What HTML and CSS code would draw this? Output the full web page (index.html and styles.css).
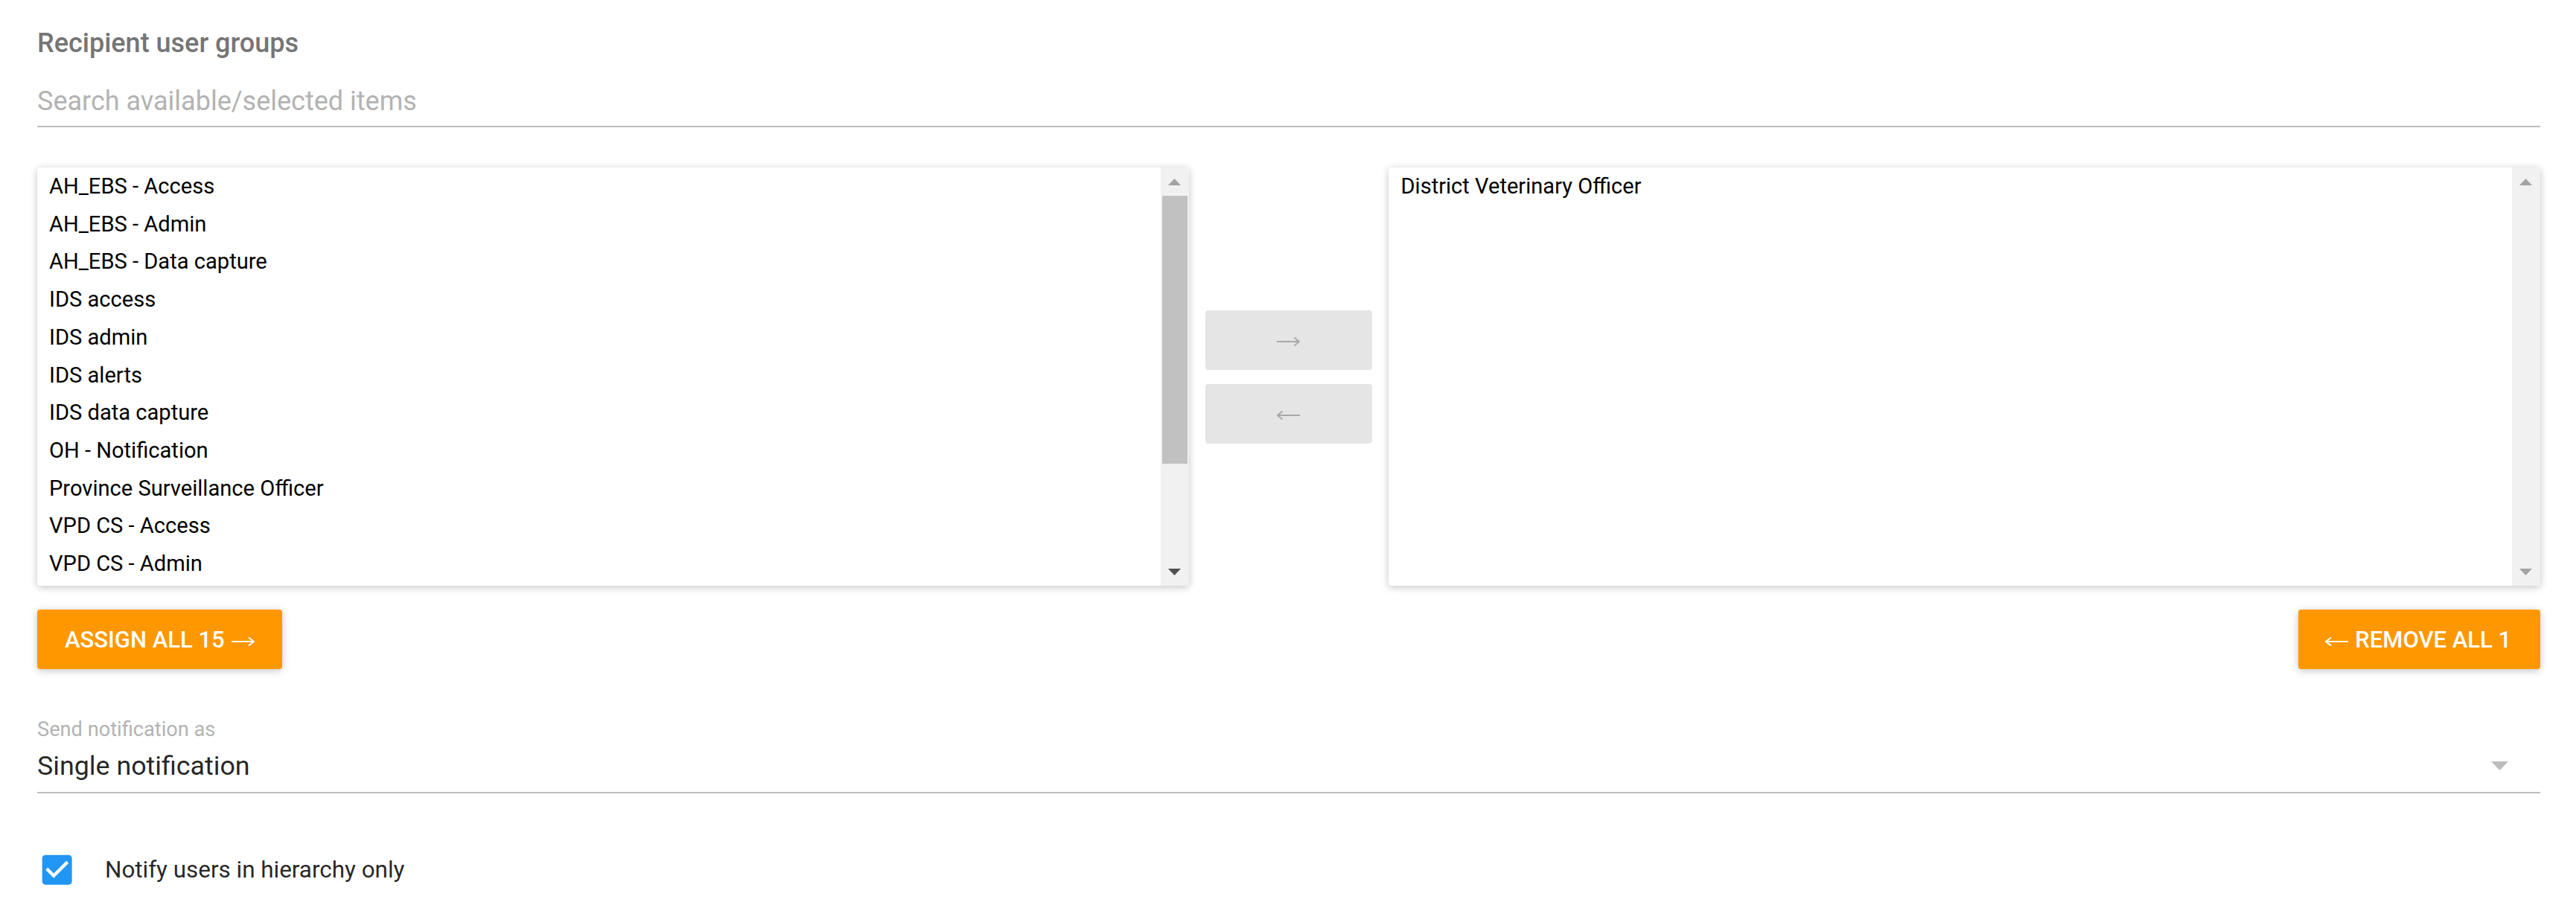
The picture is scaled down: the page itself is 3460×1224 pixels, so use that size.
FILE: index.html
```html
<!DOCTYPE html>
<html>
<head>
<meta charset="utf-8">
<title>Recipient user groups</title>
<link rel="stylesheet" href="styles.css">
</head>
<body>
<div class="page">
  <div class="group-title">Recipient user groups</div>
  <div class="search-field"><span class="placeholder">Search available/selected items</span></div>

  <div class="transfer">
    <div class="list-box">
      <div class="list-items">
        <div class="list-item">AH_EBS - Access</div>
        <div class="list-item">AH_EBS - Admin</div>
        <div class="list-item">AH_EBS - Data capture</div>
        <div class="list-item">IDS access</div>
        <div class="list-item">IDS admin</div>
        <div class="list-item">IDS alerts</div>
        <div class="list-item">IDS data capture</div>
        <div class="list-item">OH - Notification</div>
        <div class="list-item">Province Surveillance Officer</div>
        <div class="list-item">VPD CS - Access</div>
        <div class="list-item">VPD CS - Admin</div>
      </div>
      <div class="scrollbar">
        <div class="sb-btn"><svg class="sb-arrow" viewBox="0 0 17 9"><polygon points="8.5,0 17,9 0,9" fill="#a3a3a3"/></svg></div>
        <div class="sb-track"><div class="sb-thumb"></div></div>
        <div class="sb-btn"><svg class="sb-arrow" viewBox="0 0 17 9"><polygon points="0,0 17,0 8.5,9" fill="#505050"/></svg></div>
      </div>
    </div>

    <div class="transfer-actions">
      <div class="move-btn">
        <svg class="move-arrow" viewBox="0 0 31 14"><path d="M0 7H30M23.5 1.5L30 7L23.5 12.5" fill="none" stroke="#a8a8a8" stroke-width="2"/></svg>
      </div>
      <div class="move-btn">
        <svg class="move-arrow" viewBox="0 0 31 14"><path d="M31 7H1M7.5 1.5L1 7L7.5 12.5" fill="none" stroke="#a8a8a8" stroke-width="2"/></svg>
      </div>
    </div>

    <div class="list-box">
      <div class="list-items">
        <div class="list-item">District Veterinary Officer</div>
      </div>
      <div class="scrollbar">
        <div class="sb-btn"><svg class="sb-arrow" viewBox="0 0 17 9"><polygon points="8.5,0 17,9 0,9" fill="#a3a3a3"/></svg></div>
        <div class="sb-track"></div>
        <div class="sb-btn"><svg class="sb-arrow" viewBox="0 0 17 9"><polygon points="0,0 17,0 8.5,9" fill="#a3a3a3"/></svg></div>
      </div>
    </div>
  </div>

  <div class="bulk-actions">
    <button class="raised-btn">
      <span>ASSIGN ALL 15</span>
      <svg class="btn-arrow" viewBox="0 0 31 14"><path d="M0 7H30M23 1.5L30 7L23 12.5" fill="none" stroke="#ffffff" stroke-width="2"/></svg>
    </button>
    <button class="raised-btn remove">
      <svg class="btn-arrow" viewBox="0 0 31 14"><path d="M31 7H1M8 1.5L1 7L8 12.5" fill="none" stroke="#ffffff" stroke-width="2"/></svg>
      <span>REMOVE ALL 1</span>
    </button>
  </div>

  <div class="select-field">
    <div class="select-label">Send notification as</div>
    <div class="select-control">
      <span class="select-value">Single notification</span>
      <svg class="select-arrow" viewBox="0 0 23 12"><polygon points="0,0 23,0 11.5,12" fill="#bdbdbd"/></svg>
    </div>
  </div>

  <div class="checkbox-row">
    <svg class="checkbox-icon" viewBox="0 0 24 24"><path fill="#2196f3" d="M19 3H5c-1.11 0-2 .9-2 2v14c0 1.1.89 2 2 2h14c1.11 0 2-.9 2-2V5c0-1.1-.89-2-2-2zm-9 14l-5-5 1.41-1.41L10 14.17l7.59-7.59L19 8l-9 9z"/></svg>
    <span class="checkbox-label">Notify users in hierarchy only</span>
  </div>
</div>
</body>
</html>
```

FILE: styles.css
```css
* { box-sizing: border-box; }

html, body {
  margin: 0;
  padding: 0;
  background: #ffffff;
}

body {
  font-family: Roboto, "Liberation Sans", sans-serif;
}

.page {
  padding: 33px 48px 0 50px;
}

.group-title {
  font-size: 36px;
  font-weight: 500;
  line-height: 50px;
  color: #757575;
}

.search-field {
  margin-top: 29px;
  padding-bottom: 9px;
  border-bottom: 2px solid #bdbdbd;
}

.placeholder {
  display: block;
  font-size: 36px;
  line-height: 48px;
  color: #b3b3b3;
}

.transfer {
  display: flex;
  margin-top: 54px;
  height: 562px;
}

.list-box {
  flex: 0 0 46%;
  display: flex;
  background: #ffffff;
  border-radius: 4px;
  overflow: hidden;
  box-shadow: 0 2px 13px rgba(0, 0, 0, 0.12), 0 2px 9px rgba(0, 0, 0, 0.12);
}

.list-items {
  flex: 1;
  overflow: hidden;
}

.list-item {
  padding-left: 16px;
  font-size: 29.1px;
  line-height: 50.7px;
  color: #000000;
  white-space: nowrap;
}

.scrollbar {
  flex: 0 0 38px;
  display: flex;
  flex-direction: column;
  background: #f1f1f1;
}

.sb-btn {
  flex: 0 0 38px;
  display: flex;
  align-items: center;
  justify-content: center;
}

.sb-arrow {
  width: 17px;
  height: 9px;
  display: block;
}

.sb-track {
  flex: 1;
}

.sb-thumb {
  margin: 0 2px;
  height: 360px;
  background: #c1c1c1;
}

.transfer-actions {
  flex: 0 0 8%;
  display: flex;
  flex-direction: column;
  justify-content: center;
  gap: 19px;
  padding: 0 22.5px;
}

.move-btn {
  height: 80px;
  background: #e5e5e5;
  border-radius: 4px;
  display: flex;
  align-items: center;
  justify-content: center;
}

.move-arrow {
  width: 31px;
  height: 14px;
  display: block;
  margin-top: 4px;
}

.bulk-actions {
  display: flex;
  justify-content: space-between;
  margin-top: 32px;
}

.raised-btn {
  height: 80px;
  padding: 0 37px;
  border: 0;
  border-radius: 4px;
  background: #ff9800;
  color: #ffffff;
  display: inline-flex;
  align-items: center;
  gap: 9px;
  font-family: Roboto, "Liberation Sans", sans-serif;
  font-size: 31px;
  font-weight: 500;
  box-shadow: 0 2px 13px rgba(0, 0, 0, 0.12), 0 2px 9px rgba(0, 0, 0, 0.12);
}

.raised-btn.remove {
  padding-left: 36px;
  padding-right: 39px;
}

.btn-arrow {
  width: 31px;
  height: 14px;
  display: block;
  margin-top: 5px;
}

.select-field {
  margin-top: 66px;
}

.select-label {
  font-size: 27.2px;
  line-height: 30px;
  color: #b3b3b3;
}

.select-control {
  margin-top: 10px;
  display: flex;
  align-items: center;
  justify-content: space-between;
  padding-bottom: 11px;
  border-bottom: 2px solid #bdbdbd;
}

.select-value {
  font-size: 35.8px;
  line-height: 48px;
  color: rgba(0, 0, 0, 0.87);
}

.select-arrow {
  width: 23px;
  height: 12px;
  margin-right: 43px;
  display: block;
}

.checkbox-row {
  display: flex;
  align-items: center;
  margin-top: 76px;
}

.checkbox-icon {
  width: 53.3px;
  height: 53.3px;
  display: block;
}

.checkbox-label {
  margin-left: 37.7px;
  font-size: 31.4px;
  line-height: 40px;
  color: rgba(0, 0, 0, 0.87);
}
```
